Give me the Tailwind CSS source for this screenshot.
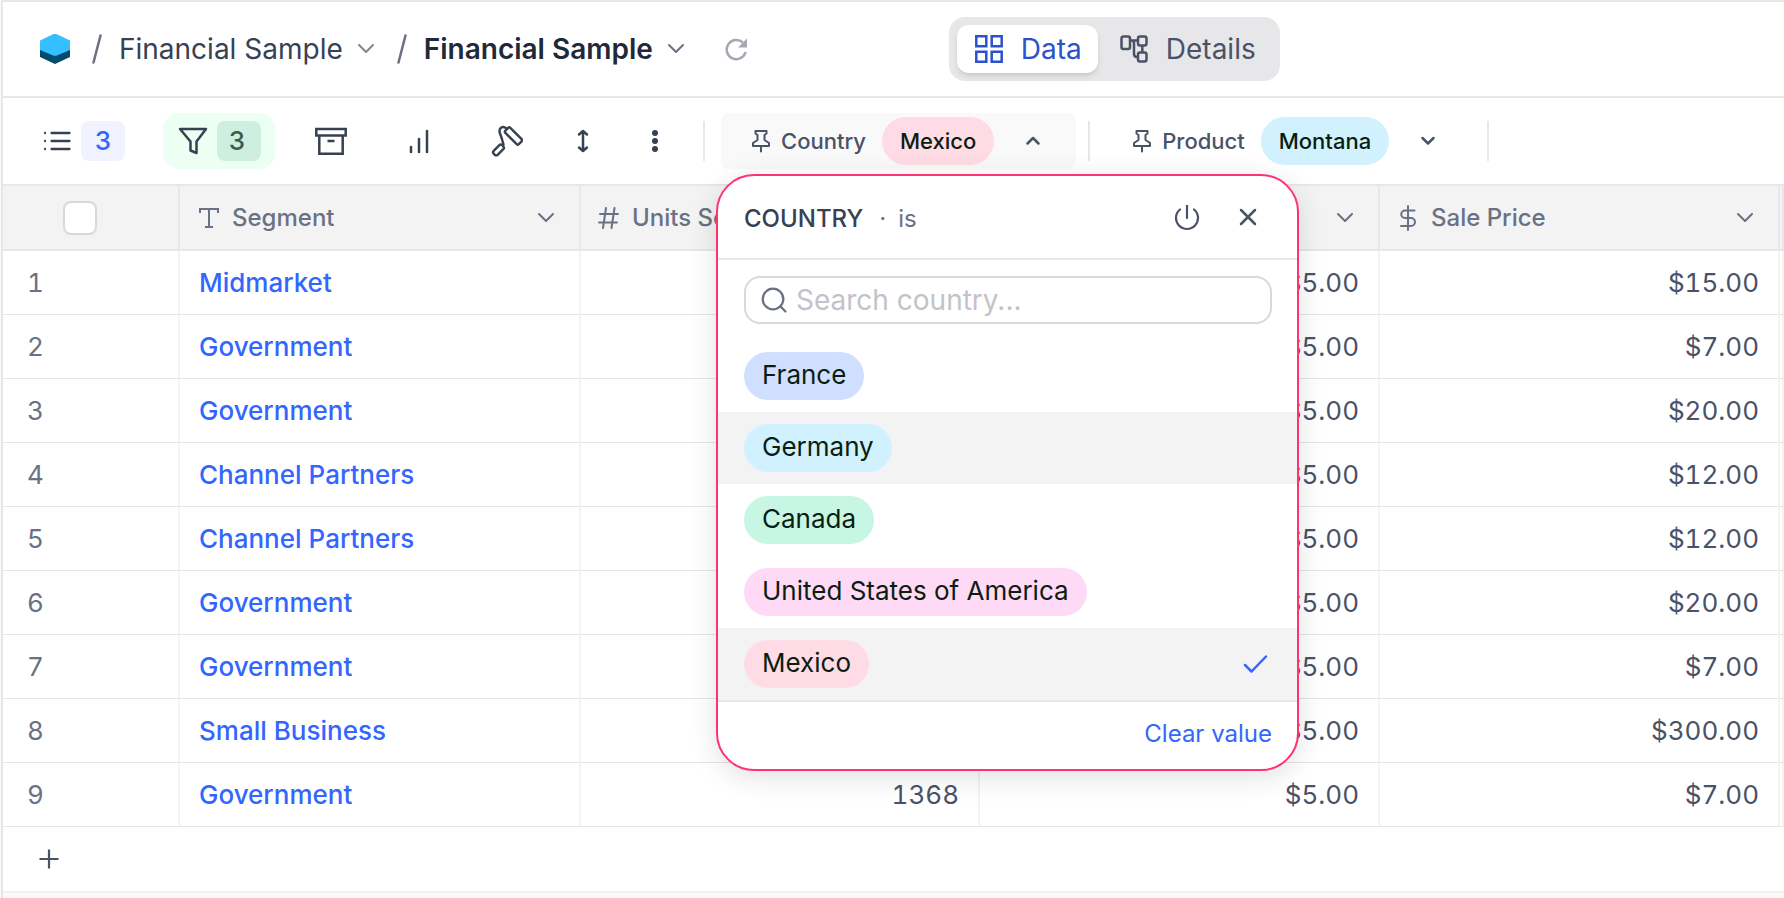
<!DOCTYPE html>
<html lang="en">
<head>
  <meta charset="UTF-8">
  <meta name="viewport" content="width=device-width, initial-scale=1.0">
  <title>Financial Sample</title>
  <script src="https://cdn.jsdelivr.net/npm/@tailwindcss/browser@4"></script>
</head>
<body class="bg-[#f9f9f9] font-['Inter',sans-serif] text-[#4a5268]">
  <div class="min-h-screen ml-px border-l-2 border-t-2 border-[#e7e7e9] overflow-hidden">

    <!-- Top bar -->
    <header class="h-24 bg-white border-b-2 border-[#e7e7e9] flex items-center pl-[37px]">
      <svg class="w-[30px] h-[30px]" viewBox="0 0 30 30">
        <path d="M0 8 15 0l15 8v15l-15 7-15-7z" fill="#004b6f"/>
        <path d="M0 6.500 12.500.6q2.500-1.200 5 0L30 6.500v9.500l-12.500 5.300q-2.500 1-5 0L0 16z" fill="#36bfff"/>
      </svg>
      <svg class="w-[10px] h-[30px] ml-[22px]" viewBox="0 0 10 30" fill="none" stroke="#6a7184" stroke-width="2.500" stroke-linecap="round"><path d="M8.500 1.500l-7 27"/></svg>
      <button class="flex items-center ml-[17px] text-[28px] leading-8 text-[#374151]">
        Financial Sample
        <svg class="w-4 h-4 ml-[15px]" viewBox="0 0 16 16" fill="none" stroke="#808695" stroke-width="2" stroke-linecap="round" stroke-linejoin="round"><path d="M1 4l7 7 7-7"/></svg>
      </button>
      <svg class="w-[10px] h-[30px] ml-[23px]" viewBox="0 0 10 30" fill="none" stroke="#6a7184" stroke-width="2.500" stroke-linecap="round"><path d="M8.500 1.500l-7 27"/></svg>
      <button class="flex items-center ml-[17px] text-[28px] leading-8 font-semibold text-[#1f293a]">
        Financial Sample
        <svg class="w-4 h-4 ml-[15px]" viewBox="0 0 16 16" fill="none" stroke="#6a7184" stroke-width="2" stroke-linecap="round" stroke-linejoin="round"><path d="M1 4l7 7 7-7"/></svg>
      </button>
      <button class="ml-10" aria-label="Reload">
        <svg class="w-6 h-6" viewBox="0 0 24 24" fill="none" stroke="#a3a8b3" stroke-width="2.500"><path d="M18.800 5.500A9.600 9.600 0 1 0 21.600 15"/><path d="M23 1.500v9h-9z" fill="#a3a8b3" stroke="none"/></svg>
      </button>
      <div class="ml-[201px] flex items-center h-16 p-2 rounded-2xl bg-[#e7e7e9] text-[28px] leading-8">
        <button class="flex items-center h-12 pl-[18px] pr-4 gap-[18px] rounded-xl bg-white shadow-md text-[#2952cc]">
          <svg class="w-7 h-7" viewBox="0 0 28 28" fill="none" stroke="#2952cc" stroke-width="2.500"><path d="M1.300 1.300h10v10h-10zM16.700 1.300h10v10h-10zM1.300 16.700h10v10h-10zM16.700 16.700h10v10h-10z"/></svg>
          Data
        </button>
        <button class="flex items-center h-12 pl-[22px] pr-4 gap-[18px]">
          <svg class="w-7 h-7" viewBox="0 0 28 28" fill="none" stroke="#4a5268" stroke-width="2.500"><rect x="1.500" y="1.500" width="8.500" height="12.500" rx="2"/><rect x="18" y="1.500" width="8.500" height="9" rx="2"/><rect x="18" y="17.500" width="8.500" height="9" rx="2"/><path d="M10 5.500h8M22.300 10.500v7M10 5.500h1.500q2.500 0 2.500 2.500v11q0 3 3 3h1"/></svg>
          Details
        </button>
      </div>
    </header>

    <!-- Toolbar -->
    <div class="h-[88px] bg-white border-b-2 border-[#e7e7e9] flex items-center pl-6 text-[22px] leading-7 font-medium">
      <button class="flex items-center gap-2 h-14 px-[14px]" aria-label="Fields">
        <svg class="w-8 h-8" viewBox="0 0 32 32" fill="none" stroke="#374151" stroke-width="2.300" stroke-linecap="round"><path d="M10.500 8h18M10.500 16h18M10.500 24h18M4 8h.01M4 16h.01M4 24h.01"/></svg>
        <span class="w-11 h-10 rounded-lg bg-[#f0f3ff] text-[#3366ff] text-[26px] leading-10">3</span>
      </button>
      <button class="flex items-center gap-2 h-14 px-[14px] ml-6 rounded-2xl bg-[#ecfff3]" aria-label="Filter">
        <svg class="w-8 h-8" viewBox="0 0 32 32" fill="none" stroke="#374151" stroke-width="2.500" stroke-linejoin="round"><path d="M3 4h26L19.500 16.500V28l-6-2.500v-9z"/></svg>
        <span class="w-11 h-10 pr-1 rounded-lg bg-[#ceefe0] text-[#3f5b4a] text-[26px] leading-10">3</span>
      </button>
      <button class="ml-6 px-4" aria-label="Group">
        <svg class="w-8 h-8" viewBox="0 0 32 32" fill="none" stroke="#374151" stroke-width="2.500"><path d="M1.300 4h29.400v6.500H1.300zM4.300 10.500v18.200h23.400V10.500M12.500 16h7"/></svg>
      </button>
      <button class="ml-6 px-4" aria-label="Sort">
        <svg class="w-8 h-8" viewBox="0 0 32 32" fill="none" stroke="#374151" stroke-width="2.500" stroke-linecap="round"><path d="M8 22v5M16 14v13M24 6v21"/></svg>
      </button>
      <button class="ml-6 px-4" aria-label="Color">
        <svg class="w-8 h-8" viewBox="0 0 32 32" fill="none" stroke="#374151" stroke-width="2.400" stroke-linecap="round" stroke-linejoin="round">
          <rect x="13" y="7.500" width="19" height="7" rx="1.500" transform="rotate(45 22.500 11)"/>
          <rect x="1.500" y="22.200" width="12" height="5.600" rx="2" transform="rotate(-45 7.500 25)"/>
          <path d="M15.500 3.500q-3-2.500-5.500-.7-2.500 2-.8 6.200 1.200 3 2 6t1.300 4.500"/>
        </svg>
      </button>
      <button class="ml-6 px-1" aria-label="Row height">
        <svg class="w-8 h-8" viewBox="0 0 32 32" fill="none" stroke="#374151" stroke-width="2.500" stroke-linecap="round" stroke-linejoin="round"><path d="M16 6v20M12 9.500L16 6l4 3.500M12 22.500l4 3.500 4-3.500"/></svg>
      </button>
      <button class="ml-6 px-3" aria-label="More">
        <svg class="w-8 h-8" viewBox="0 0 32 32" fill="#374151"><circle cx="16" cy="8" r="3"/><circle cx="16" cy="16" r="3"/><circle cx="16" cy="24" r="3"/></svg>
      </button>
      <div class="w-[2px] h-10 ml-5 mr-4 bg-[#e7e7e9]"></div>

      <div class="relative">
        <button class="flex items-center h-14 px-7 rounded-lg bg-[#f9f9fa]">
          <svg class="w-6 h-6 mr-2" viewBox="0 0 24 24" fill="none" stroke="#4a5268" stroke-width="2" stroke-linejoin="round" stroke-linecap="round"><path d="M6.500 2h11v2.500L15.500 6v5l4.500 3v3H4v-3l4.500-3V6l-2-1.500zM12 17v5.500"/></svg>
          Country
          <span class="h-12 ml-4 px-[18px] rounded-full bg-[#ffdbe6] text-[#0b1d0f] leading-[48px]">Mexico</span>
          <svg class="w-7 h-6 ml-[26px]" viewBox="0 0 28 24" fill="none" stroke="#4a5268" stroke-width="2.500" stroke-linecap="round" stroke-linejoin="round"><path d="M7.500 14.500L13 9l5.500 5.500"/></svg>
        </button>

        <!-- Country filter popover -->
        <div class="absolute z-10 top-[61px] -left-[5px] w-[583px] pb-[3px] border-2 border-[#ff3370] rounded-[38px] bg-white shadow-[0_6px_28px_rgba(0,0,0,0.12)] overflow-hidden font-normal text-[26px]">
          <div class="h-[84px] flex items-center pt-1 pl-[26px] pr-9 border-b-2 border-[#e7e7e9] text-[24px] text-[#6a7184]">
            <span class="font-medium text-[#374151]">COUNTRY</span>
            <span class="ml-4">·</span>
            <span class="ml-3">is</span>
            <button class="ml-auto" aria-label="Disable filter">
              <svg class="w-7 h-7" viewBox="0 0 28 28" fill="none" stroke="#4a5268" stroke-width="2.200" stroke-linecap="round"><path d="M14 0v13M7 4.500a11 11 0 1 0 14 0"/></svg>
            </button>
            <button class="ml-9" aria-label="Close">
              <svg class="w-6 h-6" viewBox="0 0 24 24" fill="none" stroke="#4a5268" stroke-width="2.500" stroke-linecap="round"><path d="M4 3l14 14M18 3L4 17"/></svg>
            </button>
          </div>
          <div class="pl-[26px] pr-[25px] py-4">
            <label class="flex items-center h-12 px-[14px] gap-2 border-2 border-[#d9d9db] rounded-2xl">
              <svg class="w-7 h-7 shrink-0" viewBox="0 0 28 28" fill="none" stroke="#6a7184" stroke-width="2.300" stroke-linecap="round"><circle cx="13" cy="13" r="10.300"/><path d="M20.500 20.500l5 5"/></svg>
              <input type="text" aria-label="Search country" placeholder="Search country..." class="w-full outline-none text-[28px] leading-8 placeholder:text-[#c2c3c9]">
            </label>
          </div>
          <ul class="text-[#0b1d0f] leading-[46px]">
            <li class="h-[72px] px-[26px] flex items-center"><button class="h-12 pb-[2px] px-[18px] rounded-full bg-[#d0dfff]">France</button></li>
            <li class="h-[72px] px-[26px] flex items-center bg-[#f3f3f4]"><button class="h-12 pb-[2px] px-[18px] rounded-full bg-[#d0f1fd]">Germany</button></li>
            <li class="h-[72px] px-[26px] flex items-center"><button class="h-12 pb-[2px] px-[18px] rounded-full bg-[#c7f6e4]">Canada</button></li>
            <li class="h-[72px] px-[26px] flex items-center"><button class="h-12 pb-[2px] px-[18px] rounded-full bg-[#fedaf6]">United States of America</button></li>
            <li class="h-[72px] px-[26px] flex items-center bg-[#f3f3f4]">
              <button class="h-12 pb-[2px] px-[18px] rounded-full bg-[#ffdbe6]">Mexico</button>
              <svg class="w-8 h-8 ml-auto" viewBox="0 0 32 32" fill="none" stroke="#3366ff" stroke-width="2.500" stroke-linecap="round" stroke-linejoin="round"><path d="M6 17l6.500 6.500L27 8.500"/></svg>
            </li>
          </ul>
          <div class="h-[66px] flex items-center justify-end pl-[26px] pr-[25px] border-t-2 border-[#e7e7e9]">
            <button class="text-[24px] text-[#3366ff]">Clear value</button>
          </div>
        </div>
      </div>

      <div class="w-[2px] h-10 mx-3 bg-[#e7e7e9]"></div>
      <button class="flex items-center h-14 px-7">
        <svg class="w-6 h-6 mr-2" viewBox="0 0 24 24" fill="none" stroke="#4a5268" stroke-width="2" stroke-linejoin="round" stroke-linecap="round"><path d="M6.500 2h11v2.500L15.500 6v5l4.500 3v3H4v-3l4.500-3V6l-2-1.500zM12 17v5.500"/></svg>
        Product
        <span class="h-12 ml-4 px-[18px] rounded-full bg-[#d0f1fd] text-[#0b1d0f] leading-[48px]">Montana</span>
        <svg class="w-7 h-6 ml-[26px]" viewBox="0 0 28 24" fill="none" stroke="#4a5268" stroke-width="2.500" stroke-linecap="round" stroke-linejoin="round"><path d="M7.500 9l5.500 5.500L18.500 9"/></svg>
      </button>
      <div class="w-[2px] h-10 ml-4 bg-[#e7e7e9]"></div>
    </div>

    <!-- Grid -->
    <table class="w-full table-fixed border-separate border-spacing-0 bg-white text-[26px] leading-8 tabular-nums">
      <colgroup>
        <col class="w-[177px]">
        <col class="w-[401px]">
        <col class="w-[399px]">
        <col class="w-[400px]">
        <col class="w-[400px]">
        <col>
      </colgroup>
      <thead class="bg-[#f3f3f4] text-[#6a7184] text-[24px]">
        <tr class="h-[65px] *:p-0 *:border-b-2 *:border-r-2 *:border-[#e7e7e9] *:font-medium">
          <th><input type="checkbox" aria-label="Select all" class="block appearance-none w-[34px] h-[34px] ml-[60px] rounded-lg border-2 border-[#d9d9db] bg-white"></th>
          <th>
            <div class="flex items-center pl-[17px] pr-[25px]">
              <svg class="w-6 h-6 mr-[11px]" viewBox="0 0 24 24" fill="none" stroke="#6a7184" stroke-width="2"><path d="M3 7V3h18v4M12 3v18M8 21h8"/></svg>
              Segment
              <svg class="w-4 h-4 ml-auto" viewBox="0 0 16 16" fill="none" stroke="#6a7184" stroke-width="2" stroke-linecap="round" stroke-linejoin="round"><path d="M1 4l7 7 7-7"/></svg>
            </div>
          </th>
          <th>
            <div class="flex items-center pl-4 pr-[25px]">
              <svg class="w-6 h-6 mr-[11px]" viewBox="0 0 24 24" fill="none" stroke="#6a7184" stroke-width="2" stroke-linecap="round"><path d="M3 8h18M2 16.500h18M9 2L6 22M17.500 2l-3 20"/></svg>
              Units Sold
              <svg class="w-4 h-4 ml-auto" viewBox="0 0 16 16" fill="none" stroke="#6a7184" stroke-width="2" stroke-linecap="round" stroke-linejoin="round"><path d="M1 4l7 7 7-7"/></svg>
            </div>
          </th>
          <th>
            <div class="flex items-center pl-4 pr-[25px]">
              <svg class="w-6 h-7 mr-[11px]" viewBox="0 0 24 28" fill="none" stroke="#6a7184" stroke-width="2" stroke-linecap="round"><path d="M12 2v24M18.500 6.500H9a3.700 3.700 0 0 0 0 7.500h6a4 4 0 0 1 0 8H5"/></svg>
              Mfg Price
              <svg class="w-4 h-4 ml-auto" viewBox="0 0 16 16" fill="none" stroke="#6a7184" stroke-width="2" stroke-linecap="round" stroke-linejoin="round"><path d="M1 4l7 7 7-7"/></svg>
            </div>
          </th>
          <th>
            <div class="flex items-center pl-4 pr-[25px]">
              <svg class="w-6 h-7 mr-[11px]" viewBox="0 0 24 28" fill="none" stroke="#6a7184" stroke-width="2" stroke-linecap="round"><path d="M12 2v24M18.500 6.500H9a3.700 3.700 0 0 0 0 7.500h6a4 4 0 0 1 0 8H5"/></svg>
              Sale Price
              <svg class="w-4 h-4 ml-auto" viewBox="0 0 16 16" fill="none" stroke="#6a7184" stroke-width="2" stroke-linecap="round" stroke-linejoin="round"><path d="M1 4l7 7 7-7"/></svg>
            </div>
          </th>
          <th></th>
        </tr>
      </thead>
      <tbody id="rows"></tbody>
    </table>
    <div class="h-[66px] bg-white flex items-center pl-[34px] border-b-2 border-[#f1f1f2]">
      <button aria-label="Add record">
        <svg class="w-6 h-6" viewBox="0 0 24 24" fill="none" stroke="#4a5268" stroke-width="2.200"><path d="M12 2.500v19M2.500 12h19"/></svg>
      </button>
    </div>
  </div>

  <script>
    const records = [
      ['Midmarket', '2470', '$5.00', '$15.00'],
      ['Government', '1210', '$5.00', '$7.00'],
      ['Government', '1397', '$5.00', '$20.00'],
      ['Channel Partners', '2155', '$5.00', '$12.00'],
      ['Channel Partners', '1404', '$5.00', '$12.00'],
      ['Government', '2655', '$5.00', '$20.00'],
      ['Government', '1945', '$5.00', '$7.00'],
      ['Small Business', '2574', '$5.00', '$300.00'],
      ['Government', '1368', '$5.00', '$7.00'],
    ];

    document.getElementById('rows').innerHTML = records.map(([segment, units, cost, price], i) => `
      <tr class="h-16 *:py-0 *:px-[19px] *:border-b *:border-b-[#e4e4e6] *:border-r-2 *:border-r-[#f3f3f4] text-right">
        <td class="text-left text-[#6a7184]"><span class="ml-[5px]">${i + 1}</span></td>
        <td class="text-left font-medium text-[#3366ff]">${segment}</td>
        <td>${units}</td>
        <td>${cost}</td>
        <td>${price}</td>
        <td></td>
      </tr>`).join('');
  </script>
</body>
</html>
